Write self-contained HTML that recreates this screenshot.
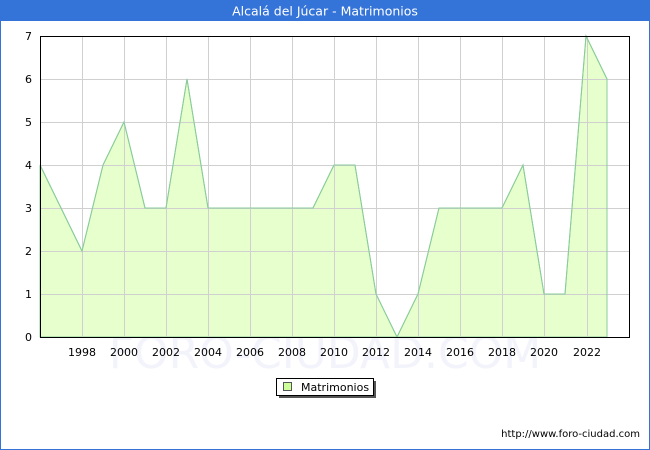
<!DOCTYPE html>
<html><head><meta charset="utf-8"><style>
html,body{margin:0;padding:0;background:#fff;}
body{width:650px;height:450px;position:relative;overflow:hidden;font-family:"DejaVu Sans","Liberation Sans",sans-serif;}
</style></head><body>
<svg width="650" height="450" xmlns="http://www.w3.org/2000/svg" style="position:absolute;left:0;top:0">
<rect x="0.5" y="0.5" width="649" height="449" fill="#fff" stroke="#3473d8"/>
<rect x="0" y="0" width="650" height="21" fill="#3473d8"/>
<text x="325" y="15.5" fill="#fff" font-size="12.5" text-anchor="middle" font-family="DejaVu Sans, sans-serif">Alcalá del Júcar - Matrimonios</text>
<text x="325" y="368" fill="#f3f3fb" font-size="44" text-anchor="middle" font-family="DejaVu Sans, sans-serif">FORO-CIUDAD.COM</text>
<polygon fill="#e6ffcc" stroke="#88cc99" stroke-width="1" points="40,337 40,165 61,208 82,251 103,165 124,122 145,208 166,208 187,79 208,208 313,208 334,165 355,165 376,294 397,337 418,294 439,208 502,208 523,165 544,294 565,294 586,36 607,79 607,337"/>
<g stroke="#d0d0d0" stroke-width="1">
<line x1="40" y1="294.5" x2="630" y2="294.5"/><line x1="40" y1="251.5" x2="630" y2="251.5"/><line x1="40" y1="208.5" x2="630" y2="208.5"/><line x1="40" y1="165.5" x2="630" y2="165.5"/><line x1="40" y1="122.5" x2="630" y2="122.5"/><line x1="40" y1="79.5" x2="630" y2="79.5"/>
<line x1="82.5" y1="36" x2="82.5" y2="337"/><line x1="124.5" y1="36" x2="124.5" y2="337"/><line x1="166.5" y1="36" x2="166.5" y2="337"/><line x1="208.5" y1="36" x2="208.5" y2="337"/><line x1="250.5" y1="36" x2="250.5" y2="337"/><line x1="292.5" y1="36" x2="292.5" y2="337"/><line x1="334.5" y1="36" x2="334.5" y2="337"/><line x1="376.5" y1="36" x2="376.5" y2="337"/><line x1="418.5" y1="36" x2="418.5" y2="337"/><line x1="460.5" y1="36" x2="460.5" y2="337"/><line x1="502.5" y1="36" x2="502.5" y2="337"/><line x1="544.5" y1="36" x2="544.5" y2="337"/><line x1="587.5" y1="36" x2="587.5" y2="337"/>
</g>
<polyline fill="none" stroke="#88cc99" stroke-width="1" points="40,165 61,208 82,251 103,165 124,122 145,208 166,208 187,79 208,208 313,208 334,165 355,165 376,294 397,337 418,294 439,208 502,208 523,165 544,294 565,294 586,36 607,79 607,337"/>
<rect x="40.5" y="36.5" width="589" height="301" fill="none" stroke="#000"/>
<g font-size="11" fill="#000" text-anchor="end">
<text x="32" y="341">0</text><text x="32" y="298">1</text><text x="32" y="255">2</text><text x="32" y="212">3</text><text x="32" y="169">4</text><text x="32" y="126">5</text><text x="32" y="83">6</text><text x="32" y="40">7</text>
</g>
<g font-size="11" fill="#000" text-anchor="middle">
<text x="82" y="356">1998</text><text x="124" y="356">2000</text><text x="166" y="356">2002</text><text x="208" y="356">2004</text><text x="250" y="356">2006</text><text x="292" y="356">2008</text><text x="334" y="356">2010</text><text x="376" y="356">2012</text><text x="418" y="356">2014</text><text x="460" y="356">2016</text><text x="502" y="356">2018</text><text x="544" y="356">2020</text><text x="587" y="356">2022</text>
</g>
<rect x="279" y="381" width="97" height="17" fill="#555"/>
<rect x="276.5" y="378.5" width="97" height="17" fill="#fff" stroke="#000"/>
<rect x="283.5" y="382.5" width="8" height="8" fill="#ccff99" stroke="#555"/>
<text x="301" y="391" font-size="11" fill="#000">Matrimonios</text>
<text x="640" y="437" font-size="10" fill="#000" text-anchor="end">http://www.foro-ciudad.com</text>
</svg>
</body></html>
